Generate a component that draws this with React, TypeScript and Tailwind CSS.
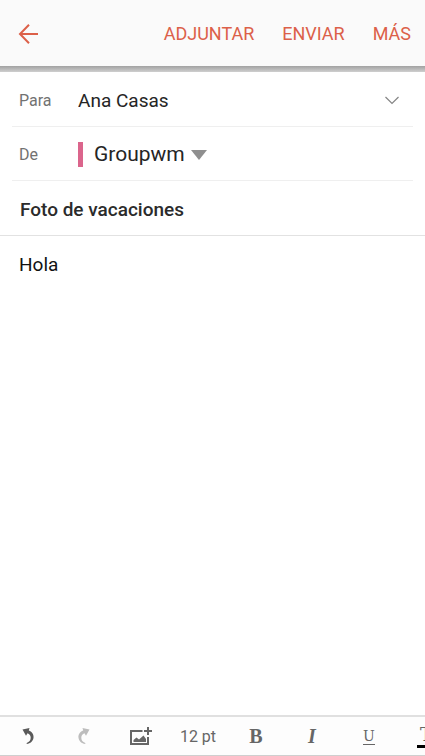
import React, { useState } from 'react';

const accounts = ['Groupwm'];

export default function App() {
  const [to, setTo] = useState('Ana Casas');
  const [from, setFrom] = useState('Groupwm');
  const [subject, setSubject] = useState('Foto de vacaciones');
  const [body, setBody] = useState('Hola');

  return (
    <div className="min-h-screen flex flex-col bg-white overflow-hidden font-['Roboto',sans-serif]">
      <header className="bg-[#fafafa] text-[#dc6049]">
        <div className="h-[66px] pt-px flex items-center justify-between pl-[18px] pr-[14px]">
          <button type="button" aria-label="Atrás">
            <svg className="w-5 h-5" viewBox="0 0 20 20" fill="none" stroke="currentColor" strokeWidth="2">
              <path d="M11 .8 2 10l9 9.200M2 10h18" />
            </svg>
          </button>
          <nav className="flex items-center gap-7 text-lg">
            <button type="button">ADJUNTAR</button>
            <button type="button">ENVIAR</button>
            <button type="button">MÁS</button>
          </nav>
        </div>
        <div className="h-[6px] bg-linear-to-b from-[#a2a2a2] to-[#cfcfcf]" />
      </header>

      <main className="flex-1 flex flex-col">
        <div className="mx-3 h-[55px] pt-[3px] flex items-center border-b border-[#efefef]">
          <label htmlFor="to" className="w-[66px] pl-[7px] shrink-0 text-base text-[#727272]">Para</label>
          <input
            id="to"
            value={to}
            onChange={(e) => setTo(e.target.value)}
            className="flex-1 min-w-0 text-[19px] leading-6 pt-px text-[#252525] outline-none"
          />
          <button type="button" aria-label="Mostrar CC y CCO" className="mr-[13px]">
            <svg className="w-4 h-4" viewBox="0 0 16 16" fill="none" stroke="#858585" strokeWidth="1.2">
              <path d="M1.500 4 8 10.500 14.500 4" />
            </svg>
          </button>
        </div>

        <div className="mx-3 h-[54px] pt-[2px] flex items-center border-b border-[#efefef]">
          <label htmlFor="from" className="w-[66px] pl-[7px] shrink-0 text-base text-[#727272]">De</label>
          <span className="w-[5px] h-[25px] mr-[11px] bg-[#db658c]" />
          <select
            id="from"
            value={from}
            onChange={(e) => setFrom(e.target.value)}
            className="appearance-none field-sizing-content pr-6 text-[21px] text-[#252525] outline-none"
          >
            {accounts.map((a) => (
              <option key={a}>{a}</option>
            ))}
          </select>
          <svg className="w-4 h-[10px] -ml-[18px] pointer-events-none" viewBox="0 0 16 10" fill="#8f8f8f">
            <path d="M0 0h16L8 10z" />
          </svg>
        </div>

        <div className="h-[55px] pt-[3px] px-5 flex items-center border-b border-[#e2e2e2]">
          <input
            aria-label="Asunto"
            value={subject}
            onChange={(e) => setSubject(e.target.value)}
            className="w-full text-[19px] leading-6 pt-px font-medium text-[#2b2b2b] outline-none"
          />
        </div>

        <textarea
          aria-label="Mensaje"
          value={body}
          onChange={(e) => setBody(e.target.value)}
          className="flex-1 w-full px-[19px] py-[17px] text-[19px] leading-6 text-[#111] outline-none resize-none"
        />
      </main>

      <footer className="h-[41px] flex items-center bg-[#fdfdfd] border-t-2 border-b border-t-[#e0e0e0] border-b-[#cfcfcf] text-[#666]">
        <button type="button" aria-label="Deshacer" className="w-14 shrink-0 flex justify-center text-[#5a5a5a]">
          <svg className="w-4 h-5" viewBox="0 0 16 20" fill="currentColor">
            <path d="M2.500 3.500 9.500 2 8.800 4.500c3.400 1.300 5.200 4 4.700 7.300-.4 3.300-3 5.800-6.800 6.300v-1c2.600-1 4-3 4-5.300 0-2-1.100-3.600-3.200-4.500L6 9.700z" />
          </svg>
        </button>
        <button type="button" aria-label="Rehacer" className="w-14 shrink-0 flex justify-center text-[#bdbdbd]">
          <svg className="w-4 h-5" viewBox="0 0 16 20" fill="currentColor">
            <path d="M13.500 3.500 6.500 2l.7 2.500c-3.400 1.300-5.200 4-4.700 7.300.4 3.300 3 5.800 6.800 6.300v-1c-2.600-1-4-3-4-5.300 0-2 1.100-3.600 3.200-4.500L10 9.700z" />
          </svg>
        </button>
        <button type="button" aria-label="Insertar imagen" className="w-14 shrink-0 flex justify-center">
          <svg className="w-6 h-5" viewBox="0 0 24 20" fill="none" stroke="currentColor" strokeWidth="2">
            <path d="M14.500 5H3v13h17v-7" />
            <path d="M20 1v8M16 5h8" />
            <path d="M5.500 16v-2l3-2.500 2.500 2 4.500-4 2.500 3.500v3z" fill="currentColor" stroke="none" />
          </svg>
        </button>
        <button type="button" className="w-[60px] pt-0.5 shrink-0 text-base">12 pt</button>
        <button type="button" aria-label="Negrita" className="w-14 shrink-0 font-['Liberation_Serif',serif] font-bold text-xl">B</button>
        <button type="button" aria-label="Cursiva" className="w-14 shrink-0 font-['Liberation_Serif',serif] font-bold italic text-xl">I</button>
        <button type="button" aria-label="Subrayado" className="w-[58px] shrink-0 flex justify-center">
          <span className="w-3 flex justify-center border-b border-current font-['DejaVu_Serif',serif] text-sm leading-4">U</span>
        </button>
        <button type="button" aria-label="Color de texto" className="w-14 shrink-0 flex justify-center">
          <span className="w-[18px] flex justify-center border-b-3 border-black font-['DejaVu_Serif',serif] text-lg leading-5">T</span>
        </button>
      </footer>
    </div>
  );
}
